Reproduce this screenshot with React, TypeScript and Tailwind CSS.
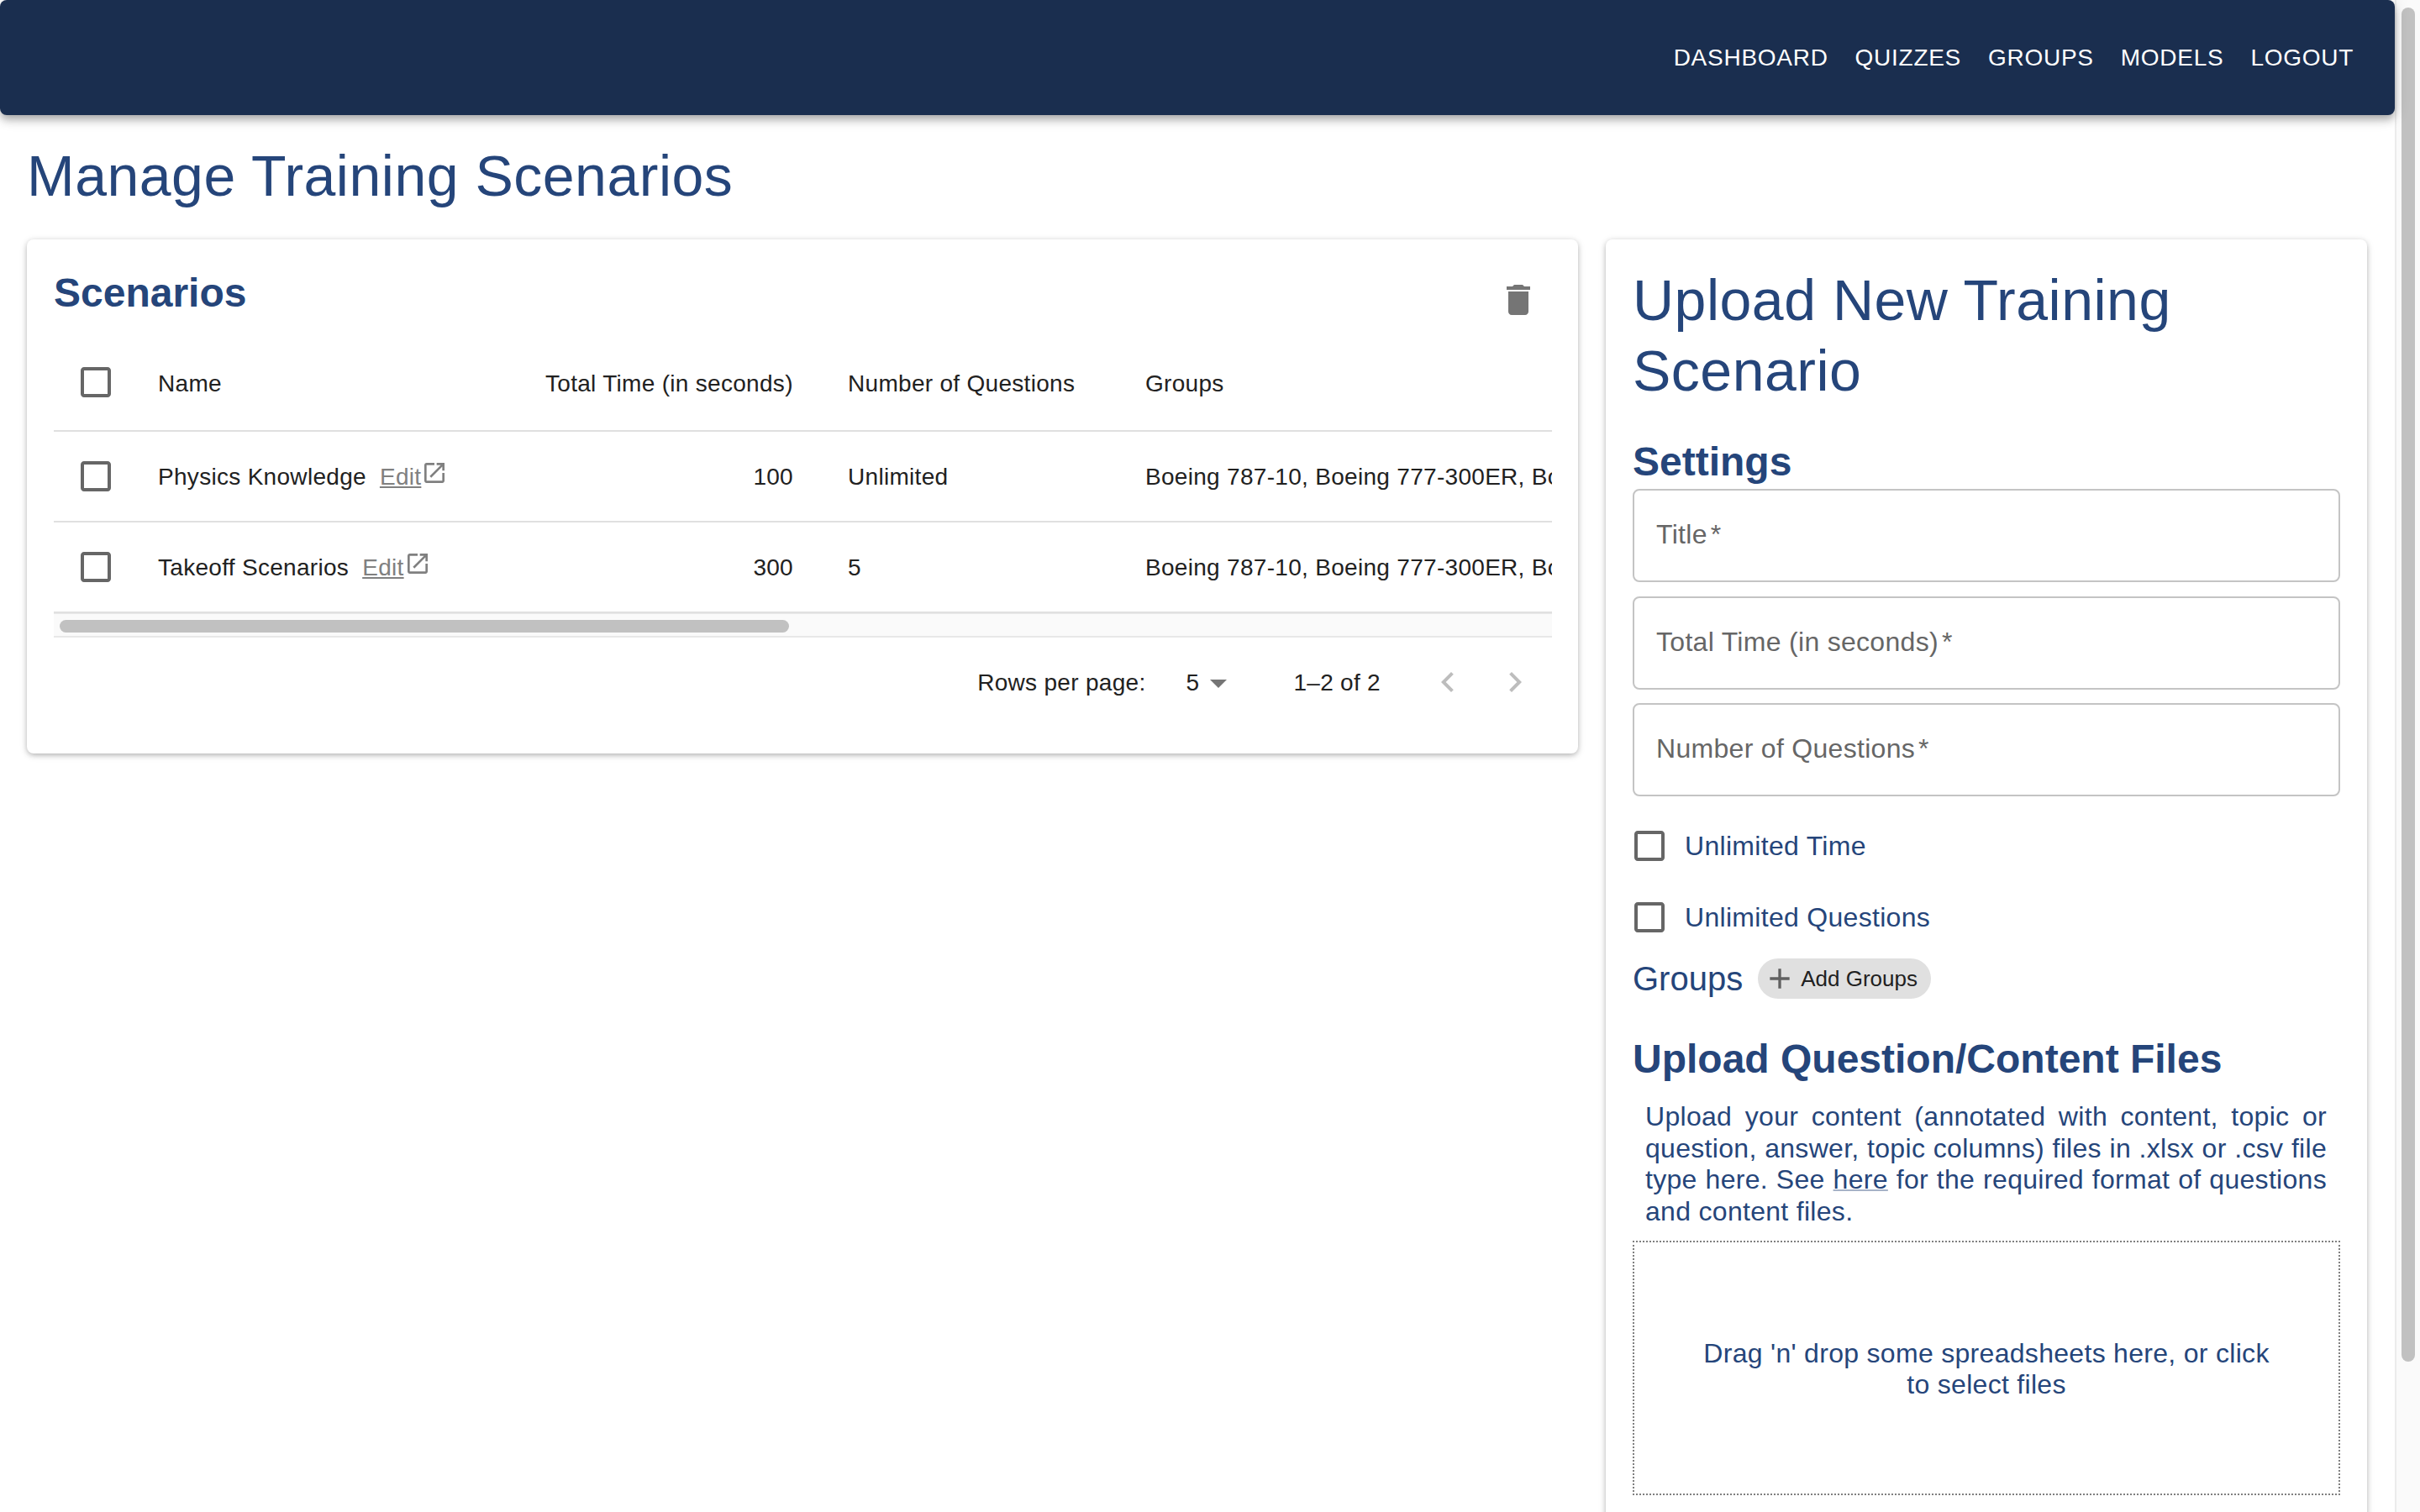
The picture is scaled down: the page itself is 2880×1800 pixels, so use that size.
// Manage Training Scenarios page: scenario table on the left, upload form on the right.
// The reference is a 2x capture of a MUI page, so sizes here are the MUI ones doubled.
const NAV_ITEMS = ['Dashboard', 'Quizzes', 'Groups', 'Models', 'Logout']

const GROUPS = 'Boeing 787-10, Boeing 777-300ER, Boeing 737-800, Airbus A320'

const ROWS = [
  { name: 'Physics Knowledge', time: '100', questions: 'Unlimited' },
  { name: 'Takeoff Scenarios', time: '300', questions: '5' },
]

function Icon({ d, className }: { d: string; className: string }) {
  return (
    <svg viewBox="0 0 24 24" fill="currentColor" className={className}>
      <path d={d} />
    </svg>
  )
}

function Checkbox({ className = '' }: { className?: string }) {
  return (
    <span className={className}>
      <Icon
        className="w-[48px] h-[48px] shrink-0 text-[#666666]"
        d="M19 5v14H5V5h14m0-2H5c-1.1 0-2 .9-2 2v14c0 1.1.9 2 2 2h14c1.1 0 2-.9 2-2V5c0-1.1-.9-2-2-2z"
      />
    </span>
  )
}

function TextField({ label }: { label: string }) {
  return (
    <div className="h-[111px] border-2 border-[#c4c4c4] rounded-[8px] pl-[26px] pt-[34px] text-[32px] leading-[37px] tracking-[0.00938em] text-[#666666]">
      {label}<span className="ml-[4px]">*</span>
    </div>
  )
}

function CheckRow({ label }: { label: string }) {
  return (
    <div className="h-[85px] flex items-center gap-[18px] -ml-[4px] text-[32px] tracking-[0.00938em] text-[#25457a]">
      <Checkbox />
      <span>{label}</span>
    </div>
  )
}

function ScenarioTable() {
  return (
    <div className="overflow-hidden">
      <table className="table-fixed border-collapse w-[2100px] text-[28px] tracking-[0.01071em] text-[#212121]">
        <colgroup>
          <col className="w-[92px]" />
          <col className="w-[461px]" />
          <col className="w-[360px]" />
          <col className="w-[354px]" />
          <col />
        </colgroup>
        <thead>
          <tr className="h-[114px] border-b-2 border-[#e0e0e0]">
            <th className="pl-[26px]"><Checkbox className="block -mt-[2px]" /></th>
            <th className="px-[32px] pt-[2px] text-left font-normal">Name</th>
            <th className="pl-[32px] pr-[34px] pt-[2px] text-right font-normal whitespace-nowrap">Total Time (in seconds)</th>
            <th className="px-[32px] pt-[2px] text-left font-normal">Number of Questions</th>
            <th className="px-[32px] pt-[2px] text-left font-normal">Groups</th>
          </tr>
        </thead>
        <tbody>
          {ROWS.map(row => (
            <tr key={row.name} className="h-[108px] border-b-2 border-[#e0e0e0]">
              <td className="pl-[26px]"><Checkbox className="block" /></td>
              <td className="px-[32px] pt-[2px]">
                <span className="inline-flex items-center whitespace-nowrap">
                  {row.name}
                  <span className="ml-[16px] underline text-[#808080]">Edit</span>
                  <Icon
                    className="w-[32px] h-[32px] -mt-[10px] text-[#808080]"
                    d="M19 19H5V5h7V3H5c-1.11 0-2 .9-2 2v14c0 1.1.89 2 2 2h14c1.1 0 2-.9 2-2v-7h-2v7zM14 3v2h3.59l-9.83 9.83 1.41 1.41L19 6.41V10h2V3h-7z"
                  />
                </span>
              </td>
              <td className="pl-[32px] pr-[33px] pt-[2px] text-right">{row.time}</td>
              <td className="px-[32px] pt-[2px]">{row.questions}</td>
              <td className="px-[32px] pt-[2px] whitespace-nowrap">{GROUPS}</td>
            </tr>
          ))}
        </tbody>
      </table>
      <div className="h-[29px] bg-[#fafafa] border-t border-b-2 border-[#e8e8e8] flex items-center pl-[7px] pt-[2px]">
        <div className="w-[868px] h-[15px] rounded-full bg-[#c1c1c1]" />
      </div>
    </div>
  )
}

function Pagination() {
  return (
    <div className="h-[107px] flex items-center justify-end pr-[20px] text-[28px] tracking-[0.01071em] text-[#212121]">
      <span>Rows per page:</span>
      <span className="ml-[48px]">5</span>
      <Icon className="w-[48px] h-[48px] ml-[-1px] text-[#757575]" d="M7 10l5 5 5-5z" />
      <span className="ml-[65px] mr-[56px]">1–2 of 2</span>
      <Icon
        className="w-[48px] h-[48px] -mt-[2px] text-[#bdbdbd]"
        d="M15.41 16.59 10.83 12l4.58-4.59L14 6l-6 6 6 6 1.41-1.41z"
      />
      <Icon
        className="w-[48px] h-[48px] -mt-[2px] ml-[32px] text-[#bdbdbd]"
        d="M8.59 16.59 13.17 12 8.59 7.41 10 6l6 6-6 6-1.41-1.41z"
      />
    </div>
  )
}

export default function App() {
  return (
    <div className="flex h-screen overflow-hidden bg-white [font-family:'Liberation_Sans',Arial,sans-serif]">
      <div className="w-[2850px] shrink-0">
        <header className="relative h-[137px] rounded-[8px] bg-[#1a2e4f] shadow-[0_4px_8px_-2px_rgba(0,0,0,0.2),0_8px_10px_0_rgba(0,0,0,0.14),0_2px_20px_0_rgba(0,0,0,0.12)] flex items-center justify-end pr-[33px]">
          {NAV_ITEMS.map(item => (
            <span key={item} className="px-[16px] text-[28px] uppercase tracking-[0.026em] text-white">
              {item}
            </span>
          ))}
        </header>

        <main className="px-[32px] pt-[30px]">
          <h1 className="text-[68px] leading-[84px] tracking-[0.00735em] font-normal text-[#25457a] mb-[34px]">
            Manage Training Scenarios
          </h1>

          <div className="flex items-start gap-[33px]">
            <section className="w-[1846px] shrink-0 rounded-[8px] bg-white shadow-[0_2px_6px_-1px_rgba(0,0,0,0.25),0_2px_10px_0_rgba(0,0,0,0.14)] pl-[32px] pr-[31px] pb-[31px]">
              <div className="h-[114px] flex items-start justify-between">
                <h2 className="mt-[32px] text-[48px] leading-[64px] font-bold text-[#25457a]">Scenarios</h2>
                <Icon
                  className="w-[48px] h-[48px] mt-[48px] mr-[16px] text-[#757575]"
                  d="M6 19c0 1.1.9 2 2 2h8c1.1 0 2-.9 2-2V7H6v12zM19 4h-3.5l-1-1h-5l-1 1H5v2h14V4z"
                />
              </div>
              <ScenarioTable />
              <Pagination />
            </section>

            <section className="w-[906px] shrink-0 rounded-[8px] bg-white shadow-[0_2px_6px_-1px_rgba(0,0,0,0.25),0_2px_10px_0_rgba(0,0,0,0.14)] px-[32px] pt-[30px] pb-[32px]">
              <h1 className="text-[68px] leading-[84px] tracking-[0.00735em] font-normal text-[#25457a]">
                Upload New Training Scenario
              </h1>
              <h2 className="mt-[35px] text-[48px] leading-[64px] font-bold text-[#25457a]">Settings</h2>
              <div className="flex flex-col gap-[16.5px]">
                <TextField label="Title" />
                <TextField label="Total Time (in seconds)" />
                <TextField label="Number of Questions" />
              </div>
              <div className="mt-[16px]">
                <CheckRow label="Unlimited Time" />
                <CheckRow label="Unlimited Questions" />
              </div>
              <div className="mt-[7px] flex items-center gap-[18px]">
                <h3 className="text-[40px] leading-[48px] font-normal text-[#25457a]">Groups</h3>
                <div className="h-[48px] w-[206px] rounded-full bg-[#e0e0e0] flex items-center pl-[6px] text-[26px] text-[#212121]">
                  <Icon className="w-[40px] h-[40px] text-[#616161]" d="M19 13h-6v6h-2v-6H5v-2h6V5h2v6h6v2z" />
                  <span className="ml-[5px]">Add Groups</span>
                </div>
              </div>
              <h2 className="mt-[40px] text-[48px] leading-[64px] font-bold text-[#25457a]">
                Upload Question/Content Files
              </h2>
              <p className="mt-[18px] pl-[15px] pr-[16px] text-[32px] leading-[37.5px] tracking-[0.00938em] text-justify text-[#25457a]">
                Upload your content (annotated with content, topic or question, answer, topic columns) files in .xlsx or .csv file type here. See{' '}
                <span className="underline decoration-[#a7b3c7] decoration-2">here</span>{' '}
                for the required format of questions and content files.
              </p>
              <div className="mt-[16px] h-[303px] border-2 border-dotted border-[#808080] flex items-center justify-center px-[70px] pt-[3px] text-center text-[32px] leading-[37.5px] tracking-[0.00938em] text-[#25457a]">
                Drag 'n' drop some spreadsheets here, or click to select files
              </div>
            </section>
          </div>
        </main>
      </div>

      {/* page scrollbar */}
      <aside className="flex-1 bg-[#fafafa] border-l-2 border-[#ececec] pl-[6px] pt-[9px]">
        <div className="w-[16px] h-[1612px] rounded-full bg-[#c1c1c1]" />
      </aside>
    </div>
  )
}
